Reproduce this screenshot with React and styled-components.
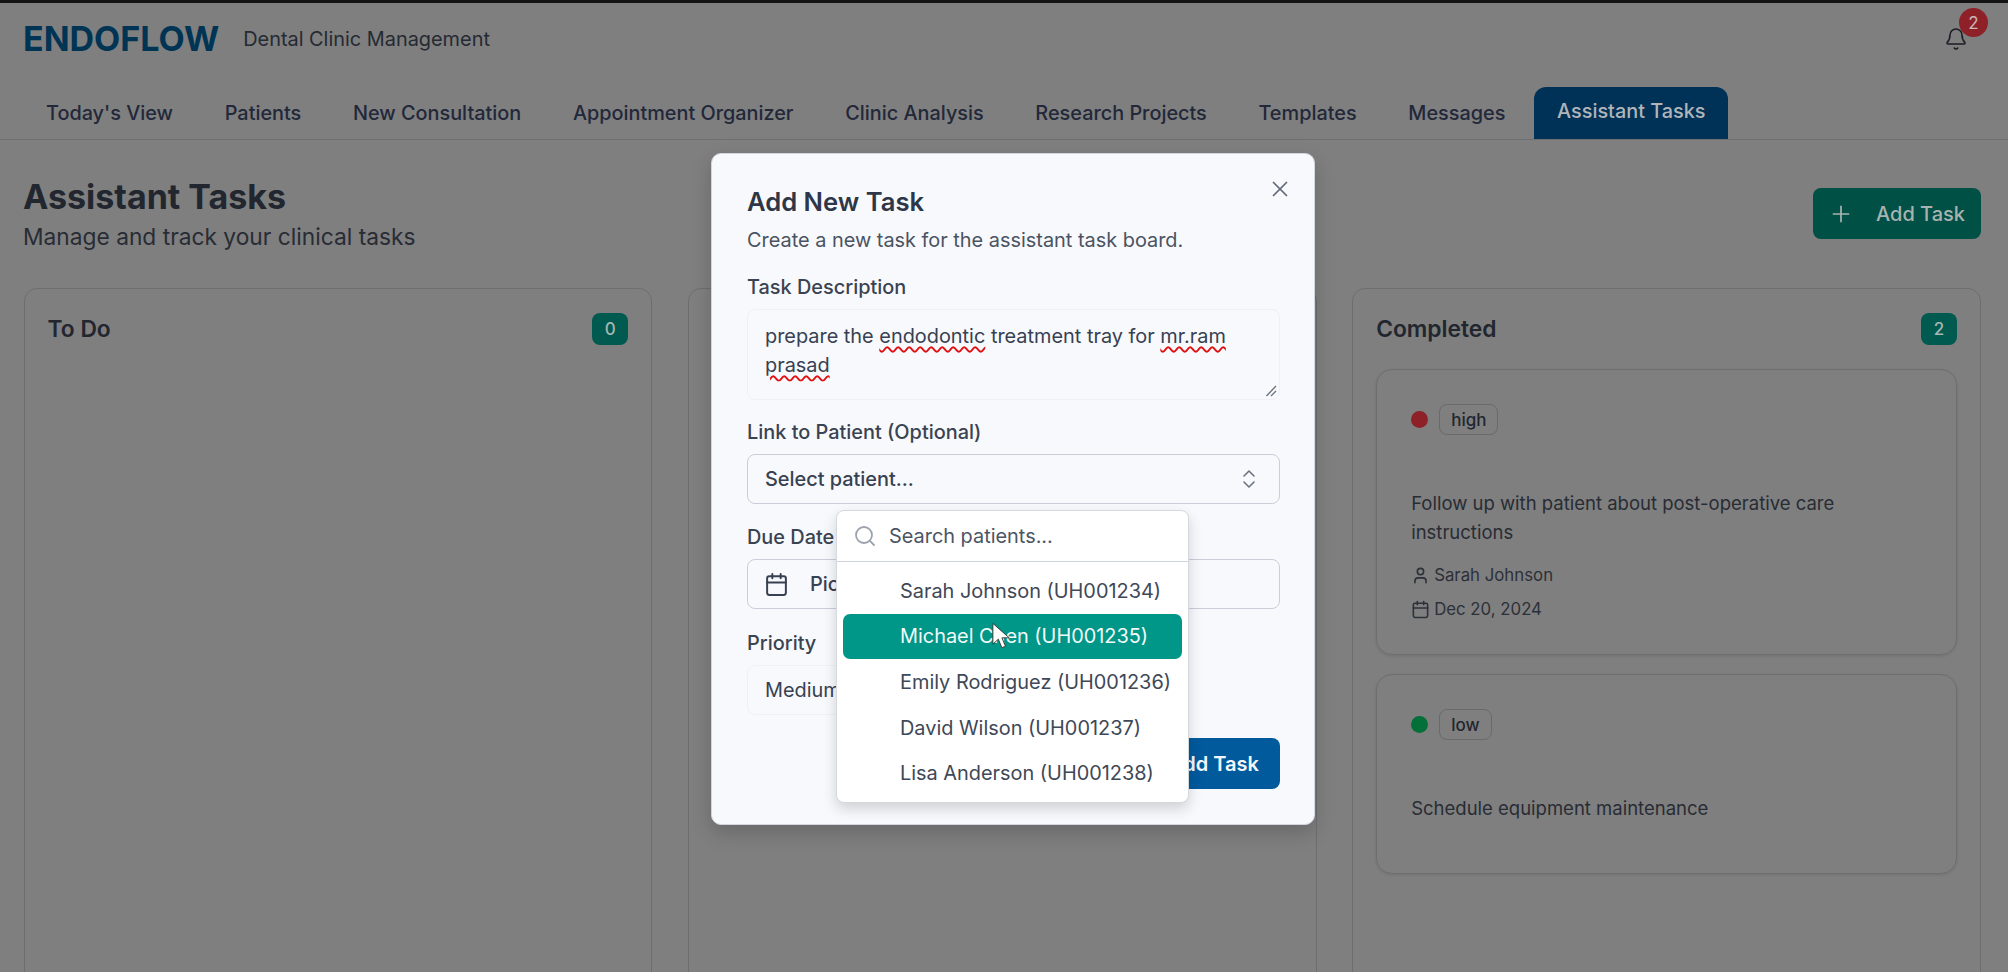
import styled, { createGlobalStyle } from "styled-components";
import { Bell, Calendar, ChevronsUpDown, Plus, Search, User, X } from "lucide-react";

const GlobalStyle = createGlobalStyle`
  * {
    box-sizing: border-box;
  }
  html,
  body {
    margin: 0;
    padding: 0;
    background: #7f7f7f;
  }
  body {
    font-family: "Inter", "Liberation Sans", sans-serif;
    color: #22262f;
  }
`;

const TABS = [
  "Today's View",
  "Patients",
  "New Consultation",
  "Appointment Organizer",
  "Clinic Analysis",
  "Research Projects",
  "Templates",
  "Messages",
  "Assistant Tasks",
];

const PATIENTS = [
  "Sarah Johnson (UH001234)",
  "Michael Chen (UH001235)",
  "Emily Rodriguez (UH001236)",
  "David Wilson (UH001237)",
  "Lisa Anderson (UH001238)",
];

const Page = styled.div`
  position: relative;
  width: 2008px;
  height: 972px;
  overflow: hidden;
  background: #7f7f7f;
`;

const TopEdge = styled.div`
  height: 3px;
  background: #141414;
`;

const Header = styled.header`
  display: flex;
  align-items: center;
  height: 72px;
  padding: 0 20px 0 23px;
`;

const Logo = styled.div`
  font-size: 34px;
  font-weight: 700;
  line-height: 38px;
  color: #003454;
`;

const Tagline = styled.div`
  flex: 1;
  margin-left: 24px;
  font-size: 19.9px;
  color: #252a33;
`;

const BellWrap = styled.div`
  position: relative;
  width: 24px;
  height: 24px;
  margin-right: 20px;
  color: #1b1e25;
`;

const BellBadge = styled.div`
  position: absolute;
  top: -19px;
  left: 15px;
  display: flex;
  align-items: center;
  justify-content: center;
  width: 29px;
  height: 29px;
  border-radius: 50%;
  background: #8e2028;
  color: #c9b7b9;
  font-size: 17px;
`;

const TabBar = styled.nav`
  display: flex;
  gap: 5.7px;
  height: 53px;
  margin-top: 12px;
  padding: 0 23px;
  border-bottom: 1px solid #6d6e70;
`;

const Tab = styled.div`
  display: flex;
  align-items: center;
  height: 52px;
  padding: 0 23px ${(p) => (p.$active ? "4px" : "0")};
  border-radius: 12px 12px 0 0;
  font-size: 19.85px;
  font-weight: 500;
  color: ${(p) => (p.$active ? "#b1b5b9" : "#22283a")};
  background: ${(p) => (p.$active ? "#003258" : "transparent")};
`;

const Main = styled.main`
  padding: 38px 27px 0 23.5px;
`;

const TitleRow = styled.div`
  display: flex;
  align-items: flex-start;
  justify-content: space-between;
  margin-left: -0.5px;
`;

const PageTitle = styled.h1`
  margin: 0;
  font-size: 34px;
  font-weight: 700;
  line-height: 38px;
  color: #22262f;
`;

const PageSub = styled.p`
  margin: 5px 0 0;
  font-size: 22.75px;
  line-height: 32px;
  color: #282c34;
`;

const AddButton = styled.div`
  display: flex;
  align-items: center;
  gap: 22px;
  width: 168px;
  height: 51px;
  margin-top: 10px;
  padding: 0 0 0 15px;
  border-radius: 8px;
  background: #005045;
  color: #a8b3b0;
  font-size: 20px;
  font-weight: 500;
`;

const Board = styled.div`
  display: grid;
  grid-template-columns: repeat(3, 1fr);
  gap: 35.5px;
  margin-top: 35px;
`;

const Column = styled.section`
  height: 720px;
  padding: 24px 23px;
  border: 1px solid #6d6e70;
  border-radius: 13px;
`;

const ColumnHead = styled.div`
  display: flex;
  align-items: center;
  justify-content: space-between;
  margin-bottom: 24px;
`;

const ColumnTitle = styled.h2`
  margin: 0 0 2px;
  font-size: 22.8px;
  font-weight: 600;
  color: #22262f;
`;

const CountBadge = styled.div`
  display: flex;
  align-items: center;
  justify-content: center;
  width: 36px;
  height: 32px;
  border-radius: 8px;
  background: #005a50;
  color: #a6b6b2;
  font-size: 17px;
  font-weight: 500;
`;

const Card = styled.article`
  margin-bottom: 19px;
  padding: 34px 33px 35px 34px;
  border: 1px solid #6d6e70;
  border-radius: 16px;
  box-shadow: 0 1px 3px rgba(0, 0, 0, 0.12);
`;

const PriorityRow = styled.div`
  display: flex;
  align-items: center;
  gap: 11px;
  margin-bottom: 54px;
`;

const Dot = styled.span`
  width: 17px;
  height: 17px;
  border-radius: 50%;
  background: ${(p) => p.$color};
`;

const PriorityTag = styled.span`
  display: flex;
  align-items: center;
  height: 31px;
  padding: 0 11px;
  border: 1px solid #696a6c;
  border-radius: 8px;
  font-size: 17px;
  font-weight: 500;
  color: #22262f;
`;

const CardText = styled.p`
  margin: 0 0 15px;
  font-size: 18.5px;
  line-height: 28.5px;
  color: #282c34;
`;

const MetaList = styled.div`
  display: flex;
  flex-direction: column;
  gap: 14px;
  padding-top: 4px;
`;

const Meta = styled.div`
  display: flex;
  align-items: center;
  gap: 4px;
  height: 20px;
  font-size: 16.8px;
  color: #2c3038;
`;

const Modal = styled.div`
  position: absolute;
  top: 153px;
  left: 711px;
  width: 604px;
  height: 672px;
  padding: 33px 34px 0 35px;
  border: 1px solid #d3d6de;
  border-radius: 10px;
  background: #f8f9fc;
  box-shadow: 0 8px 20px rgba(0, 0, 0, 0.18);
`;

const CloseButton = styled.div`
  position: absolute;
  top: 22px;
  right: 21px;
  width: 26px;
  height: 26px;
  color: #5f6977;
`;

const ModalTitle = styled.h2`
  margin: 0;
  font-size: 25.6px;
  font-weight: 600;
  line-height: 30px;
  color: #2d3748;
`;

const ModalDesc = styled.p`
  margin: 9px 0 0;
  font-size: 19.9px;
  line-height: 29px;
  color: #4a5362;
`;

const Field = styled.div`
  margin-top: ${(p) => p.$top}px;
`;

const Label = styled.div`
  margin-bottom: 11px;
  font-size: 19.9px;
  font-weight: 500;
  line-height: 22px;
  color: #3a4351;
`;

const TextBox = styled.div`
  position: relative;
  height: 91px;
  margin-bottom: -1px;
  padding: 12px 17px;
  border: 1px solid #f0f1f6;
  border-radius: 8px;
  font-size: 19.9px;
  line-height: 28.5px;
  color: #374151;
`;

const Misspelt = styled.span`
  text-decoration: underline wavy #e01010 1.5px;
  text-underline-offset: 3px;
`;

const Grip = styled.svg`
  position: absolute;
  right: 2px;
  bottom: 2px;
`;

const SelectBox = styled.div`
  display: flex;
  align-items: center;
  justify-content: space-between;
  width: ${(p) => p.$width || "100%"};
  height: 50px;
  padding: 0 18px 0 17px;
  border: 1px solid ${(p) => (p.$faint ? "#f0f1f6" : "#c9ced8")};
  border-radius: 8px;
  font-size: 19.9px;
  font-weight: ${(p) => (p.$faint ? 400 : 450)};
  color: #374151;
`;

const DateText = styled.span`
  display: flex;
  align-items: center;
  gap: 21px;
  margin-left: -1px;
`;

const Footer = styled.div`
  display: flex;
  justify-content: flex-end;
  margin-top: 23px;
`;

const SubmitButton = styled.div`
  display: flex;
  align-items: center;
  justify-content: center;
  width: 132px;
  height: 51px;
  border-radius: 8px;
  background: #005a9c;
  color: #f3f6fa;
  font-size: 20px;
  font-weight: 600;
`;

const Popover = styled.div`
  position: absolute;
  top: 356px;
  left: 124px;
  width: 353px;
  height: 293px;
  border: 1px solid #d5d8df;
  border-radius: 8px;
  background: #fff;
  box-shadow: 0 6px 14px rgba(0, 0, 0, 0.16);
`;

const SearchRow = styled.div`
  display: flex;
  align-items: center;
  gap: 12px;
  height: 51px;
  padding: 0 16px;
  border-bottom: 1px solid #cfd3db;
  font-size: 19.9px;
  color: #4b5563;
  svg {
    color: #9ca3af;
  }
`;

const PatientList = styled.div`
  padding: 6px;
`;

const PatientItem = styled.div`
  display: flex;
  align-items: center;
  height: 45.6px;
  padding-left: 57px;
  border-radius: 7px;
  font-size: 19.9px;
  white-space: nowrap;
  color: ${(p) => (p.$active ? "#f2faf9" : "#3f4856")};
  background: ${(p) => (p.$active ? "#009688" : "transparent")};
`;

const Cursor = styled.svg`
  position: absolute;
  top: 622px;
  left: 992px;
`;

export default function App() {
  return (
    <Page>
      <GlobalStyle />
      <TopEdge />
      <Header>
        <Logo>ENDOFLOW</Logo>
        <Tagline>Dental Clinic Management</Tagline>
        <BellWrap>
          <Bell size={24} strokeWidth={1.6} />
          <BellBadge>2</BellBadge>
        </BellWrap>
      </Header>
      <TabBar>
        {TABS.map((tab) => (
          <Tab key={tab} $active={tab === "Assistant Tasks"}>
            {tab}
          </Tab>
        ))}
      </TabBar>
      <Main>
        <TitleRow>
          <div>
            <PageTitle>Assistant Tasks</PageTitle>
            <PageSub>Manage and track your clinical tasks</PageSub>
          </div>
          <AddButton>
            <Plus size={26} strokeWidth={1.6} />
            Add Task
          </AddButton>
        </TitleRow>
        <Board>
          <Column>
            <ColumnHead>
              <ColumnTitle>To Do</ColumnTitle>
              <CountBadge>0</CountBadge>
            </ColumnHead>
          </Column>
          <Column />
          <Column>
            <ColumnHead>
              <ColumnTitle>Completed</ColumnTitle>
              <CountBadge>2</CountBadge>
            </ColumnHead>
            <Card>
              <PriorityRow>
                <Dot $color="#8e2028" />
                <PriorityTag>high</PriorityTag>
              </PriorityRow>
              <CardText>
                Follow up with patient about post-operative care instructions
              </CardText>
              <MetaList>
                <Meta>
                  <User size={19} />
                  Sarah Johnson
                </Meta>
                <Meta>
                  <Calendar size={19} />
                  Dec 20, 2024
                </Meta>
              </MetaList>
            </Card>
            <Card>
              <PriorityRow>
                <Dot $color="#03703a" />
                <PriorityTag>low</PriorityTag>
              </PriorityRow>
              <CardText>Schedule equipment maintenance</CardText>
            </Card>
          </Column>
        </Board>
      </Main>

      <Modal>
        <CloseButton>
          <X size={26} strokeWidth={1.6} />
        </CloseButton>
        <ModalTitle>Add New Task</ModalTitle>
        <ModalDesc>Create a new task for the assistant task board.</ModalDesc>
        <Field $top={21}>
          <Label>Task Description</Label>
          <TextBox>
            prepare the <Misspelt>endodontic</Misspelt> treatment tray for{" "}
            <Misspelt>mr.ram</Misspelt> <Misspelt>prasad</Misspelt>
            <Grip width="12" height="12" viewBox="0 0 12 12">
              <path
                d="M11 1 1.5 11M11 6 6 11"
                stroke="#6b7280"
                strokeWidth="1.3"
                fill="none"
              />
            </Grip>
          </TextBox>
        </Field>
        <Field $top={22}>
          <Label>Link to Patient (Optional)</Label>
          <SelectBox>
            Select patient...
            <ChevronsUpDown size={24} strokeWidth={1.6} color="#6b7280" />
          </SelectBox>
        </Field>
        <Field $top={22}>
          <Label>Due Date</Label>
          <SelectBox>
            <DateText>
              <Calendar size={25} strokeWidth={1.9} />
              Pick a date
            </DateText>
          </SelectBox>
        </Field>
        <Field $top={23}>
          <Label>Priority</Label>
          <SelectBox $faint $width="300px">
            Medium
          </SelectBox>
        </Field>
        <Footer>
          <SubmitButton>Add Task</SubmitButton>
        </Footer>
        <Popover>
          <SearchRow>
            <Search size={24} strokeWidth={1.8} />
            Search patients...
          </SearchRow>
          <PatientList>
            {PATIENTS.map((patient, i) => (
              <PatientItem key={patient} $active={i === 1}>
                {patient}
              </PatientItem>
            ))}
          </PatientList>
        </Popover>
      </Modal>
      <Cursor width="18" height="28" viewBox="0 0 20 30">
        <path
          d="M1 1v23l6-5.5 4 9.5 4-1.6-4-9.4h8z"
          fill="#fff"
          stroke="#333"
          strokeWidth="1"
        />
      </Cursor>
    </Page>
  );
}
